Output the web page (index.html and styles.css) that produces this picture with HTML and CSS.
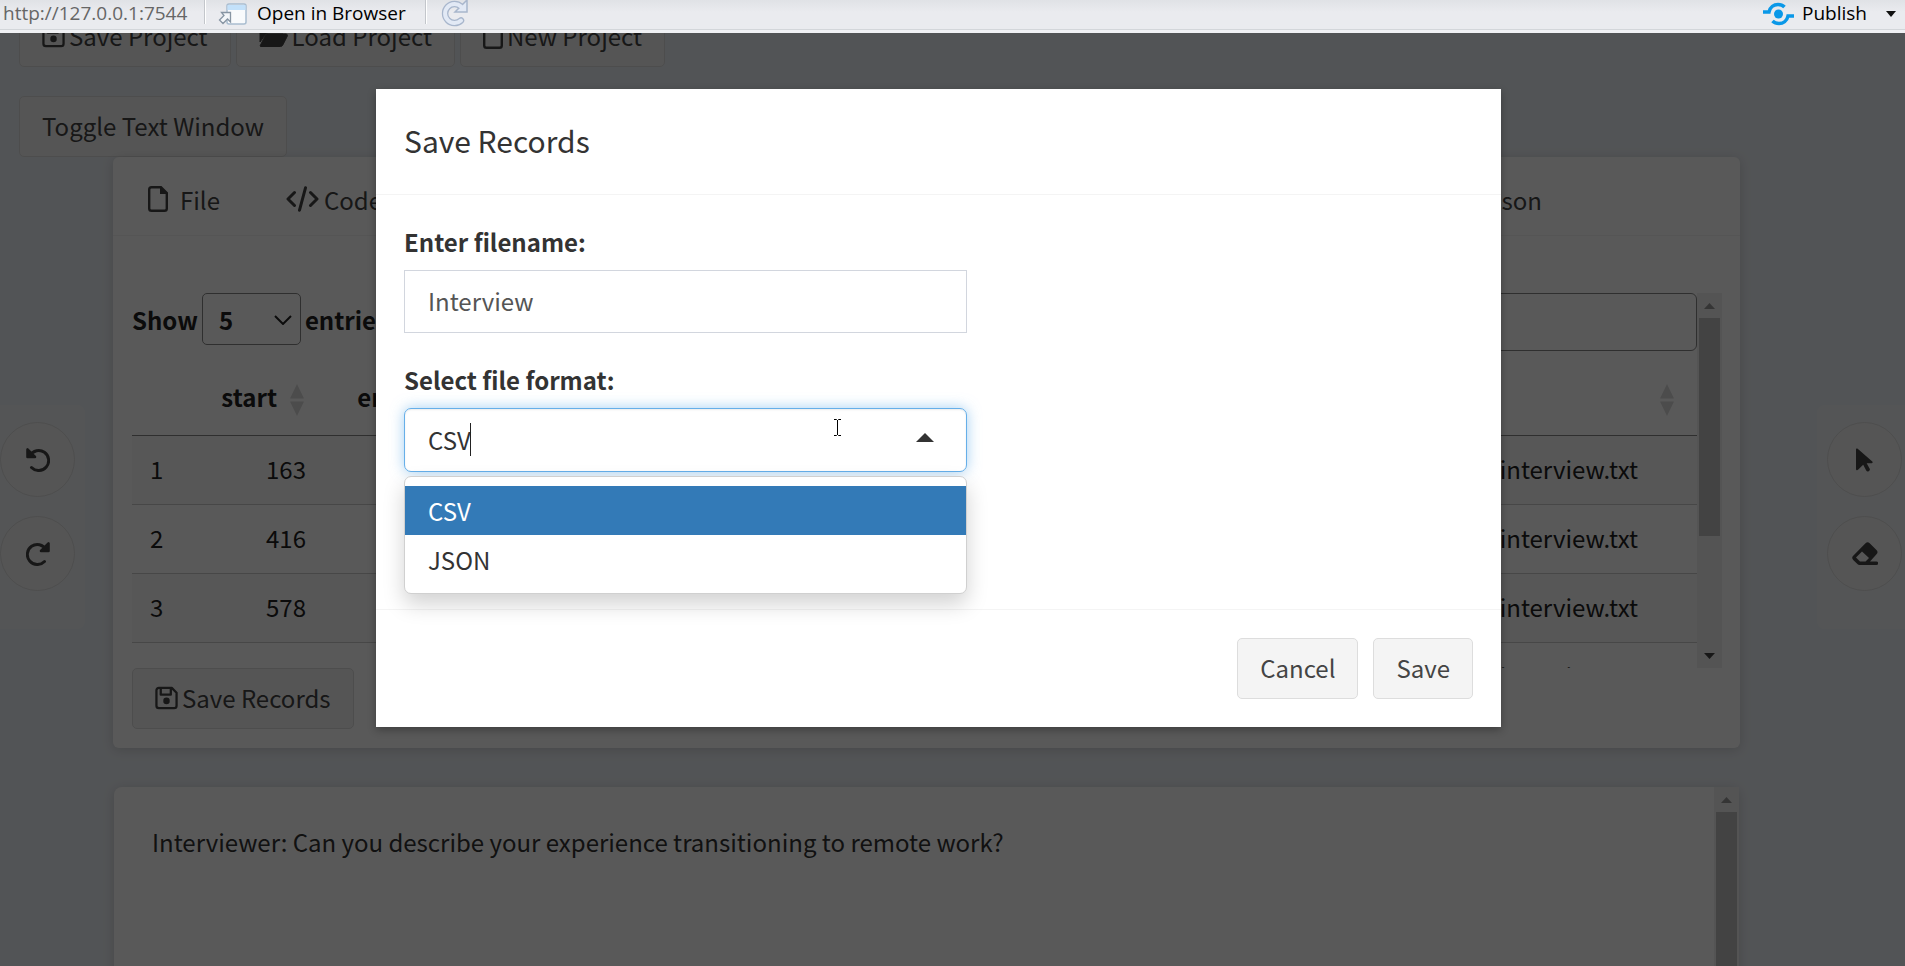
FILE: index.html
```html
<!DOCTYPE html>
<html lang="en">
<head>
<meta charset="utf-8">
<title>Text annotation</title>
<link rel="stylesheet" href="styles.css">
</head>
<body>
<svg class="defs" width="0" height="0" aria-hidden="true">
  <symbol id="i-save" viewBox="0 0 24 24"><path d="M4 1.5h13.5l5 5V20a2.5 2.5 0 0 1-2.500 2.500H4A2.500 2.500 0 0 1 1.500 20V4A2.500 2.500 0 0 1 4 1.500z M6 2v6.500h10.500V2" fill="none" stroke="currentColor" stroke-width="2.400" stroke-linejoin="round"/><circle cx="12" cy="15" r="3.400" fill="currentColor"/></symbol>
  <symbol id="i-file" viewBox="0 0 20 26"><path d="M3.500 1.200h9.500l5.800 5.800v15.500a2.300 2.300 0 0 1-2.300 2.300h-13a2.300 2.300 0 0 1-2.300-2.300v-19a2.300 2.300 0 0 1 2.300-2.300z" fill="none" stroke="currentColor" stroke-width="2.400"/><path d="M12 1v7h7z" fill="currentColor"/></symbol>
  <symbol id="i-folder" viewBox="0 0 29 24"><path d="M1 18V5a3 3 0 0 1 3-3h6l3 3h8a3 3 0 0 1 3 3v1H9a3 3 0 0 0-2.600 1.500z M1 22l5.600-11A2 2 0 0 1 8.400 10H27a1.500 1.500 0 0 1 1.300 2.200l-4.600 9A2.500 2.500 0 0 1 21.500 22.500H1.500z" fill="currentColor" stroke="currentColor" stroke-width="1"/></symbol>
  <symbol id="i-code" viewBox="0 0 33 26"><path d="M8.500 6.500L2 13l6.500 6.500M24.500 6.500L31 13l-6.500 6.500M19.500 1.800l-6 22.400" fill="none" stroke="currentColor" stroke-width="3" stroke-linecap="round" stroke-linejoin="round"/></symbol>
  <symbol id="i-undo" viewBox="0 0 24 24"><path d="M4 7.500A10 10 0 1 1 5.500 19.500" fill="none" stroke="currentColor" stroke-width="3" stroke-linecap="round"/><path d="M1.500 1.500v7.500h7.500z" fill="currentColor" stroke="currentColor" stroke-width="2.600" stroke-linejoin="round"/></symbol>
  <symbol id="i-sort" viewBox="0 0 14 32"><path d="M7 0l7 14.500H0zM7 32l7-14.500H0z" fill="currentColor"/></symbol>
</svg>

<header class="toolbar">
  <span class="url">http://127.0.0.1:7544</span>
  <span class="divider"></span>
  <button class="tool" type="button">
    <svg width="29" height="22" viewBox="0 0 29 22"><rect x="9" y="1" width="19" height="20" rx="2" fill="#f8fafc" stroke="#a9bdd0" stroke-width="1.500"/><path d="M9.500 2h18v5h-18z" fill="#c3e1fa"/><path d="M3.500 9.500h9v9.500l-3-3-4.500 4.500-3.500-3.500 4.500-4.500z" fill="#f3f6f9" stroke="#8795a3" stroke-width="1.300"/></svg>
    Open in Browser
  </button>
  <span class="divider"></span>
  <button class="tool reload" type="button" aria-label="Reload">
    <svg width="30" height="28" viewBox="0 0 30 28"><path d="M22 6.500A9.500 9.500 0 1 0 22 20.500" fill="none" stroke="#a8b6cc" stroke-width="6.500" stroke-linecap="round"/><path d="M16 12h12V0z" fill="#e2e9f5" stroke="#a8b6cc" stroke-width="1.500"/><path d="M22 6.500A9.500 9.500 0 1 0 22 20.500" fill="none" stroke="#e2e9f5" stroke-width="4" stroke-linecap="round"/></svg>
  </button>
  <button class="tool publish" type="button">
    <svg width="31" height="24" viewBox="0 0 31 24"><circle cx="15.500" cy="12" r="4.500" fill="#0a98e8"/><path d="M0 10h6C7 5 11 2.500 15 2.500c3 0 5 1 6.500 2.500M31 14h-6c-1 5-5 7.500-9 7.500-3 0-5-1-6.500-2.500" fill="none" stroke="#0a98e8" stroke-width="3.500"/></svg>
    Publish
    <svg class="publish-caret" width="10" height="6" viewBox="0 0 10 6"><path d="M0 0h10L5 6z" fill="#111"/></svg>
  </button>
</header>

<div class="viewport">
  <main class="page">
    <div class="btn-row">
      <button class="btn" type="button"><svg width="23" height="24"><use href="#i-save"/></svg>Save Project</button>
      <button class="btn" type="button"><svg width="29" height="24"><use href="#i-folder"/></svg>Load Project</button>
      <button class="btn" type="button"><svg width="20" height="26"><use href="#i-file"/></svg>New Project</button>
    </div>
    <div class="btn-row toggle-row"><button class="btn" type="button">Toggle Text Window</button></div>

    <section class="box">
      <nav class="tabs">
        <a class="tab tab-file" href="#file"><svg width="20" height="26"><use href="#i-file"/></svg>File</a>
        <a class="tab" href="#code"><svg width="33" height="26"><use href="#i-code"/></svg>Code</a>
        <a class="tab tab-last" href="#comparison">Comparison</a>
      </nav>
      <div class="box-body">
        <div class="scroller">
          <div class="scroll-content">
            <div class="table-tools">
              <label class="length">Show
                <span class="length-box"><select><option>5</option></select><svg width="18" height="10" viewBox="0 0 18 10"><path d="M1 1l8 8 8-8" fill="none" stroke="currentColor" stroke-width="2"/></svg></span>
                entries</label>
              <input class="search" type="search" aria-label="Search">
            </div>
            <table class="records">
              <colgroup><col class="c-index"><col class="c-start"><col class="c-end"><col></colgroup>
              <thead><tr><th></th><th class="num">start<svg width="14" height="32"><use href="#i-sort"/></svg></th><th class="num">end<svg width="14" height="32"><use href="#i-sort"/></svg></th><th class="file"><svg width="14" height="32"><use href="#i-sort"/></svg></th></tr></thead>
              <tbody>
                <tr><td>1</td><td class="num">163</td><td></td><td class="file">_interview.txt</td></tr>
                <tr><td>2</td><td class="num">416</td><td></td><td class="file">_interview.txt</td></tr>
                <tr><td>3</td><td class="num">578</td><td></td><td class="file">_interview.txt</td></tr>
                <tr><td></td><td></td><td></td><td class="file">_interview.txt</td></tr>
              </tbody>
            </table>
          </div>
          <div class="scrollbar"><i class="arrow up"></i><i class="thumb"></i><i class="arrow down"></i></div>
        </div>
        <button class="btn" type="button"><svg width="23" height="24"><use href="#i-save"/></svg>Save Records</button>
      </div>
    </section>

    <section class="box text-box">
      <p class="transcript">Interviewer: Can you describe your experience transitioning to remote work?</p>
      <div class="scrollbar"><i class="arrow up"></i><i class="thumb thumb-full"></i></div>
    </section>
  </main>

  <aside class="side side-left">
    <button class="round" type="button" aria-label="Undo"><svg width="24" height="24"><use href="#i-undo"/></svg></button>
    <button class="round" type="button" aria-label="Redo"><svg class="flip" width="24" height="24"><use href="#i-undo"/></svg></button>
  </aside>
  <aside class="side side-right">
    <button class="round" type="button" aria-label="Select"><svg width="17" height="24" viewBox="0 0 17 24"><path d="M0 1.500C0 .3 1 .2 1.700.8L16.300 13.500c.8.700.5 1.700-.6 1.700h-5l3 5.600c.5 1-.1 1.900-1 2.400-1 .5-2 .2-2.500-.8L7.200 16.700 2 21.800c-.8.800-2 .4-2-.8z" fill="currentColor"/></svg></button>
    <button class="round" type="button" aria-label="Erase"><svg width="26" height="24" viewBox="0 0 26 24"><path d="M13.500 1.300a3 3 0 0 1 4.200 0l6.800 6.800a3 3 0 0 1 0 4.200L18 19.500h6.500a1.600 1.600 0 0 1 0 3.500H7.500a3 3 0 0 1-2.100-.9l-4.200-4.200a3 3 0 0 1 0-4.200zM10 9.500L4 15.600l4 3.900h5.500L17 16z" fill="currentColor" fill-rule="evenodd"/></svg></button>
  </aside>

  <div class="backdrop">
    <form class="modal" role="dialog" aria-labelledby="modal-title">
      <h4 class="modal-title" id="modal-title">Save Records</h4>
      <div class="modal-body">
        <label class="field-label" for="filename">Enter filename:</label>
        <input class="field" id="filename" type="text" value="Interview">
        <label class="field-label" for="format">Select file format:</label>
        <div class="combo">
          <input class="field combo-input" id="format" type="text" role="combobox" aria-expanded="true" aria-controls="format-list" value="CSV">
          <i class="text-caret"></i>
          <i class="combo-arrow"></i>
          <svg class="pointer" width="7" height="17" viewBox="0 0 7 17"><path d="M0 .5h2.500l1 1 1-1H7M3.500 1v15M0 16.500h2.500l1-1 1 1H7" fill="none" stroke="#000" stroke-width="1"/></svg>
          <ul class="menu" id="format-list" role="listbox">
            <li class="option selected" role="option" aria-selected="true">CSV</li>
            <li class="option" role="option">JSON</li>
          </ul>
        </div>
      </div>
      <div class="modal-footer">
        <button class="btn" type="button">Cancel</button>
        <button class="btn" type="button">Save</button>
      </div>
    </form>
  </div>
</div>
</body>
</html>
```

FILE: styles.css
```css
* { box-sizing: border-box; }
body {
  margin: 0;
  height: 100vh;
  display: flex;
  flex-direction: column;
  overflow: hidden;
  background: #ecf0f5;
  color: #333;
  font: 24px/33px "Noto Sans CJK SC", "Noto Sans", sans-serif;
}
button, input, select { font: inherit; color: inherit; }
svg { flex: none; }
.defs { position: absolute; }

/* Browser strip */
.toolbar {
  flex: none;
  height: 33px;
  display: flex;
  align-items: flex-start;
  padding: 0 9px 0 3px;
  background: linear-gradient(#e0e2e6, #eaebef 12px, #eaebef 29px, #d3d6da 29px, #d3d6da 30px, #f0f1f4 30px);
  font: 19px/27px "Open Sans", "Noto Sans", sans-serif;
}
.url { width: 201px; color: #666; white-space: nowrap; }
.divider { width: 2px; height: 24px; background: #c3c6cb; border-right: 1px solid #fff; }
.tool { display: flex; align-items: center; gap: 10px; padding: 0; border: 0; background: none; color: #000; }
.divider + .tool { margin: 0 19px 0 12px; }
.tool.publish { margin-left: auto; gap: 8px; }
.publish-caret { margin-left: 11px; }

/* App page */
.viewport { position: relative; flex: 1; min-height: 0; overflow: hidden; }
.page { height: 100%; display: flex; flex-direction: column; margin-top: -27px; }
.btn-row { display: flex; gap: 5px; padding: 0 19px; margin-bottom: 29px; }
.toggle-row { margin-bottom: 0; }
.btn {
  display: inline-flex;
  align-items: center;
  gap: 4px;
  padding: 12px 22px 14px;
  border: 1px solid #ddd;
  border-radius: 5px;
  background: #f4f4f4;
  color: #444;
  white-space: nowrap;
}
.box {
  flex: none;
  margin: 0 165px 39px 113px;
  border-radius: 6px;
  background: #fff;
  box-shadow: 0 2px 12px rgba(0, 0, 0, .15);
}
.tabs { display: flex; align-items: center; height: 79px; padding: 10px 0 0 35px; border-bottom: 1px solid #f4f4f4; }
.tab { display: flex; align-items: center; gap: 5px; margin-right: 66px; padding-bottom: 4px; color: #444; text-decoration: none; }
.tab-file { gap: 12px; }
.tab-last { margin: 0 198px 0 auto; }
.box-body { padding: 57px 18px 19px 19px; }
.scroller { display: flex; height: 375px; overflow: hidden; }
.scroll-content { flex: 1; min-width: 0; color: #222; }
.table-tools { display: flex; justify-content: space-between; align-items: flex-start; }
.length { display: flex; align-items: center; gap: 4px; font-weight: bold; }
.length-box { position: relative; color: #222; }
.length-box select {
  appearance: none;
  display: block;
  width: 99px;
  height: 52px;
  padding: 0 16px;
  border: 1px solid #888;
  border-radius: 5px;
  background: none;
}
.length-box svg { position: absolute; right: 9px; top: 22px; }
.search { width: 400px; height: 58px; border: 1px solid #888; border-radius: 6px; background: none; }
.records { width: 100%; table-layout: fixed; border-collapse: collapse; }
.c-index { width: 72px; }
.c-start { width: 120px; }
.c-end { width: 125px; }
.records th { height: 84px; padding: 10px 20px 0 0; border-bottom: 1px solid #888; text-align: left; }
.records th svg { margin-left: 13px; vertical-align: middle; color: #dadada; }
.records td { height: 69px; padding: 0 18px 2px; border-bottom: 1px solid #ccc; }
.records .num { text-align: right; white-space: nowrap; }
.records th.file { padding-right: 23px; text-align: right; }
.records td.file { padding-right: 59px; text-align: right; }
.records tbody tr:nth-child(odd) { background: #f9f9f9; }

.scrollbar { flex: none; width: 25px; display: flex; flex-direction: column; align-items: center; background: #f0f0f0; }
.arrow { width: 11px; height: 6px; background: #999; clip-path: polygon(0 100%, 50% 0, 100% 100%); }
.arrow.up { margin: 10px 0 9px; }
.arrow.down { margin: auto 0 9px; background: #444; clip-path: polygon(0 0, 100% 0, 50% 100%); }
.thumb { width: 21px; height: 218px; background: #c1c1c1; }
.thumb-full { flex: 1; }
.text-box { flex: 1 0 180px; display: flex; margin: 0 166px -40px 114px; border-radius: 8px; }
.transcript { flex: 1; margin: 0; padding: 38px; color: #333; }

.side { position: absolute; top: 372px; display: flex; flex-direction: column; gap: 19px; padding: 17px 10px 38px; background: #f1f4f7; }
.side-left { left: 0; padding-left: 0; border-radius: 0 8px 8px 0; }
.side-right { right: 0; padding-right: 3px; border-radius: 8px 0 0 8px; }
.round {
  display: grid;
  place-items: center;
  width: 75px;
  height: 75px;
  padding: 0;
  border: 1px solid #ddd;
  border-radius: 50%;
  background: #f4f4f4;
  color: #444;
}
.flip { transform: scaleX(-1); }

/* Dialog */
.backdrop { position: absolute; inset: 0; padding: 56px 404px 0 376px; background: rgba(0, 0, 0, .65); }
.modal { background: #fff; box-shadow: 0 3px 8px rgba(0, 0, 0, .3); }
.modal-title { margin: 0; padding: 30px 28px 32px; border-bottom: 1px solid #f4f4f4; font-weight: normal; font-size: 30px; line-height: 43px; }
.modal-body { padding: 30px 28px 137px; }
.field-label { display: block; margin-bottom: 12px; font-weight: bold; }
.field {
  display: block;
  width: 563px;
  height: 63px;
  margin-bottom: 30px;
  padding: 0 23px 2px;
  border: 1px solid #d2d6de;
  background: #fff;
  color: #555;
  outline: none;
}
.combo { position: relative; width: 563px; }
.combo-input {
  height: 64px;
  margin: 0;
  border-color: #66afe9;
  border-radius: 7px;
  color: #333;
  box-shadow: inset 0 1px 2px rgba(0, 0, 0, .08), 0 0 14px rgba(102, 175, 233, .6);
}
.text-caret { position: absolute; left: 66px; top: 15px; width: 1px; height: 33px; background: #222; }
.combo-arrow { position: absolute; right: 33px; top: 25px; width: 18px; height: 9px; background: #333; clip-path: polygon(0 100%, 50% 0, 100% 100%); }
.pointer { position: absolute; left: 430px; top: 11px; }
.menu {
  position: absolute;
  top: 68px;
  left: 0;
  right: 0;
  margin: 0;
  padding: 9px 0;
  border: 1px solid #d0d0d0;
  border-radius: 7px;
  background: #fff;
  box-shadow: 0 10px 21px rgba(0, 0, 0, .18);
  list-style: none;
}
.option { padding: 8px 23px; }
.option.selected { background: #337ab7; color: #fff; }
.modal-footer { display: flex; justify-content: flex-end; gap: 15px; padding: 28px; border-top: 1px solid #f4f4f4; }
```
